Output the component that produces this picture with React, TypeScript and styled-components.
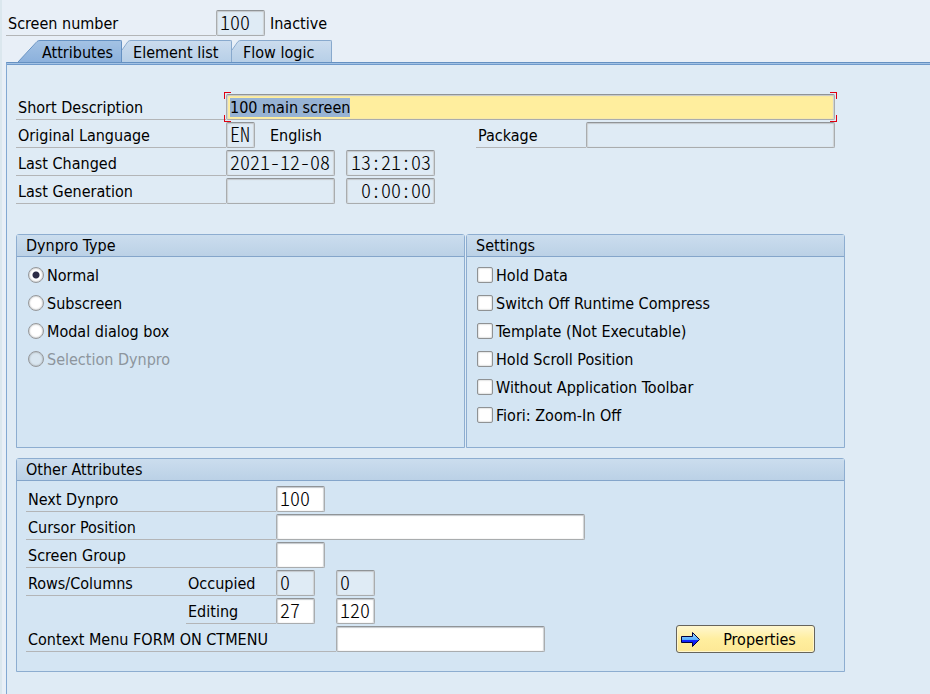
import React, { useEffect, useRef } from "react";
import styled, { createGlobalStyle, css } from "styled-components";

const GlobalStyle = createGlobalStyle`
  *, *::before, *::after { box-sizing: border-box; }
  body {
    margin: 0;
    background: #e8eff7;
    color: #000;
    font: 16px/27px "DejaVu Sans Condensed", "Noto Sans", sans-serif;
  }
  button, input { font: inherit; color: inherit; }
`;

const Page = styled.div`
  display: flex;
  flex-direction: column;
  min-height: 100vh;
  border-left: 2px solid #dbe7ee;
  padding: 10px 0 0 4px;
`;

const Row = styled.div<{ $inset?: number }>`
  display: flex;
  align-items: flex-start;
  height: 26px;
  padding-left: ${(p) => p.$inset ?? 0}px;
`;

const Label = styled.label<{ $width: number }>`
  flex: 0 0 ${(p) => p.$width}px;
  height: 26px;
  padding-left: 2px;
  white-space: nowrap;
  border-bottom: 1px solid #b3b5b7;
`;

const Caption = styled.span<{ $width?: number }>`
  flex: 0 0 ${(p) => (p.$width ? p.$width + "px" : "auto")};
  padding-left: 2px;
  white-space: nowrap;
`;

const Gap = styled.span<{ $width: number }>`
  flex: 0 0 ${(p) => p.$width}px;
`;

const Field = styled.input<{ $width?: number; $end?: boolean }>`
  ${(p) => (p.$width ? css`flex: 0 0 ${p.$width}px; width: ${p.$width}px;` : css`flex: 1 1 0;`)}
  min-width: 0;
  height: 26px;
  margin: 0;
  padding: 0 3px 3px;
  border: 1px solid #a9acae;
  border-top-color: #909497;
  border-radius: 2px;
  outline: none;
  background: #fff;
  box-shadow: inset 0 1px 1px #c4c8cc, inset 1px 0 1px #d0d3d6, inset -1px 0 1px #d0d3d6;
  font-family: "Noto Sans CJK KR", sans-serif;
  font-size: 20px;
  font-weight: 300;
  font-feature-settings: "hwid";
  line-height: 22px;
  text-align: ${(p) => (p.$end ? "right" : "left")};
  &:read-only { background: #dfebf5; }
`;

const FocusFrame = styled.div`
  position: relative;
  flex: 1 1 0;
  display: flex;
`;

const DescriptionField = styled(Field)`
  padding: 1px 3px 0;
  background: #ffee9e;
  font-family: "DejaVu Sans Condensed", "Noto Sans", sans-serif;
  font-size: 16px;
  font-weight: 400;
  &::selection { background: rgba(150, 178, 212, 0.99); color: #000; }
`;

const Corner = styled.span<{ $v: "top" | "bottom"; $h: "left" | "right" }>`
  position: absolute;
  width: 7px;
  height: 7px;
  ${(p) => p.$v}: -2px;
  ${(p) => p.$h}: -2px;
  border: 0 solid #e00010;
  border-${(p) => p.$v}-width: 1px;
  border-${(p) => p.$h}-width: 1px;
  pointer-events: none;
`;

const TabBar = styled.div`
  display: flex;
  align-items: flex-end;
  height: 22px;
  margin-top: 4px;
  padding-left: 12px;
`;

const TabButton = styled.button<{ $width: number }>`
  display: flex;
  min-width: ${(p) => p.$width}px;
  height: 22px;
  padding: 0;
  border: 0;
  background: none;
`;

const TabText = styled.span<{ $active?: boolean }>`
  flex: 1;
  height: 22px;
  padding: 0 8px 0 2px;
  line-height: 23px;
  text-align: left;
  white-space: nowrap;
  border: solid ${(p) => (p.$active ? "#6591c2" : "#88a9cd")};
  border-width: 1px 1px 0 0;
  border-top-right-radius: 2px;
  background: ${(p) => (p.$active ? "linear-gradient(#a3c2e4, #8cb1dc)" : "linear-gradient(#cbdcee, #b7cfe7)")};
`;

const TabPanel = styled.main`
  flex: 1;
  border-left: 1px solid #82a8d2;
  border-top: 1px solid #6591c2;
  box-shadow: inset 0 1px #a3c2e4, inset 0 2px #6f9acb;
  background: #dfebf5;
  padding: 31px 9px 0 9px;
`;

const Content = styled.div`
  max-width: 829px;
`;

const Rows = styled.div`
  display: flex;
  flex-direction: column;
  gap: 2px;
`;

const Groups = styled.div`
  display: grid;
  grid-template-columns: 449fr 379fr;
  gap: 10px 1px;
  margin-top: 30px;
`;

const Group = styled.fieldset<{ $wide?: boolean }>`
  ${(p) => p.$wide && "grid-column: 1 / -1;"}
  min-width: 0;
  margin: 0;
  padding: 0;
  border: 1px solid #8dadd0;
  border-radius: 3px 3px 0 0;
  background: #d4e5f3;
`;

const GroupTitle = styled.legend`
  float: left;
  width: 100%;
  height: 22px;
  padding: 0 9px;
  line-height: 21px;
  border-bottom: 1px solid #84a5ca;
  background: linear-gradient(#cbddee, #bbd1e6);
`;

const GroupBody = styled.div<{ $options?: boolean }>`
  clear: both;
  padding: ${(p) => (p.$options ? "4px 10px 18px" : "5px 29px 19px 9px")};
`;

const Option = styled.label<{ $disabled?: boolean }>`
  display: flex;
  align-items: center;
  gap: 3px;
  height: 28px;
  line-height: 29px;
  color: ${(p) => (p.$disabled ? "#8d959d" : "#000")};
`;

const Radio = styled.input`
  appearance: none;
  width: 16px;
  height: 16px;
  margin: 0 0 0 1px;
  border: 1px solid #95989b;
  border-radius: 50%;
  background: #fff;
  box-shadow: inset 0 0 2px #8f9294;
  &:checked { background: radial-gradient(circle, #2b2b45 3px, #fff 4px); }
  &:disabled { background: #d9e6f0; }
`;

const Check = styled.input`
  appearance: none;
  width: 16px;
  height: 16px;
  margin: 0;
  border: 1px solid #8f9294;
  border-radius: 2px;
  background: #fff;
  box-shadow: inset 0 0 2px #a8abad;
  &:checked { background: #2b2b45; }
`;

const PropertiesButton = styled.button`
  display: flex;
  align-items: center;
  width: 139px;
  height: 28px;
  margin: -1px 0 0 auto;
  padding: 0 4px;
  border: 1px solid #66645c;
  border-radius: 3px;
  background: linear-gradient(#fff7cf, #ffee9f 50%, #fde895);
  box-shadow: inset 0 0 0 1px #fff6cc;
`;

const ButtonText = styled.span`
  flex: 1;
  padding-left: 8px;
  text-align: center;
`;

const Slant = ({ width, foot, active }: { width: number; foot: number; active?: boolean }) => {
  const id = active ? "tabActive" : "tabIdle";
  const edge = active ? "#6591c2" : "#88a9cd";
  return (
    <svg width={width} height="22" viewBox={`0 0 ${width} 22`} aria-hidden="true">
      <defs>
        <linearGradient id={id} x1="0" y1="0" x2="0" y2="22" gradientUnits="userSpaceOnUse">
          <stop offset="0" stopColor={active ? "#a3c2e4" : "#cbdcee"} />
          <stop offset="1" stopColor={active ? "#8cb1dc" : "#b7cfe7"} />
        </linearGradient>
      </defs>
      <path d={`M0 22V${foot}L${width - 2} 1L${width} 0V22Z`} fill={`url(#${id})`} />
      <path d={`M0 ${foot}L${width - 3} 1.5Q${width - 2} .5 ${width} .5`} fill="none" stroke={edge} />
    </svg>
  );
};

const Arrow = () => (
  <svg width="20" height="17" viewBox="0 0 20 17" aria-hidden="true">
    <defs>
      <linearGradient id="arrowFill" x1="0" y1="0" x2="0" y2="17" gradientUnits="userSpaceOnUse">
        <stop offset="0.2" stopColor="#8fd4ff" />
        <stop offset="0.5" stopColor="#5aaeff" />
        <stop offset="0.54" stopColor="#1428ff" />
        <stop offset="1" stopColor="#0000d8" />
      </linearGradient>
    </defs>
    <path d="M.5 5.5H11.5V1.5L18.5 8.5L11.5 15.5V11.5H.5Z" fill="url(#arrowFill)" stroke="#000040" />
  </svg>
);

const tabs = [
  { text: "Attributes", width: 104, slant: 22, foot: 22, active: true },
  { text: "Element list", width: 110, slant: 9, foot: 10 },
  { text: "Flow logic", width: 100, slant: 9, foot: 10 },
];

const dynproTypes = ["Normal", "Subscreen", "Modal dialog box", "Selection Dynpro"];

const settings = [
  "Hold Data",
  "Switch Off Runtime Compress",
  "Template (Not Executable)",
  "Hold Scroll Position",
  "Without Application Toolbar",
  "Fiori: Zoom-In Off",
];

export default function App() {
  const description = useRef<HTMLInputElement>(null);

  useEffect(() => {
    description.current?.focus();
    description.current?.select();
  }, []);

  return (
    <>
      <GlobalStyle />
      <Page>
        <Row>
          <Label $width={210} htmlFor="screen">Screen number</Label>
          <Field id="screen" $width={49} defaultValue="100" readOnly />
          <Gap $width={3} />
          <Caption>Inactive</Caption>
        </Row>
        <TabBar role="tablist">
          {tabs.map((t) => (
            <TabButton key={t.text} type="button" role="tab" aria-selected={!!t.active} $width={t.width}>
              <Slant width={t.slant} foot={t.foot} active={t.active} />
              <TabText $active={t.active}>{t.text}</TabText>
            </TabButton>
          ))}
        </TabBar>
        <TabPanel>
          <Content>
            <Rows>
              <Row>
                <Label $width={210} htmlFor="desc">Short Description</Label>
                <FocusFrame>
                  <DescriptionField id="desc" ref={description} defaultValue="100 main screen" />
                  <Corner $v="top" $h="left" />
                  <Corner $v="top" $h="right" />
                  <Corner $v="bottom" $h="left" />
                  <Corner $v="bottom" $h="right" />
                </FocusFrame>
                <Gap $width={10} />
              </Row>
              <Row>
                <Label $width={210} htmlFor="lang">Original Language</Label>
                <Field id="lang" $width={29} defaultValue="EN" readOnly />
                <Gap $width={13} />
                <Caption $width={208}>English</Caption>
                <Label $width={110} htmlFor="package">Package</Label>
                <Field id="package" readOnly />
                <Gap $width={10} />
              </Row>
              <Row>
                <Label $width={210} htmlFor="changed">Last Changed</Label>
                <Field id="changed" $width={109} defaultValue="2021-12-08" readOnly />
                <Gap $width={11} />
                <Field aria-label="Last changed time" $width={89} $end defaultValue="13:21:03" readOnly />
              </Row>
              <Row>
                <Label $width={210} htmlFor="generated">Last Generation</Label>
                <Field id="generated" $width={109} readOnly />
                <Gap $width={11} />
                <Field aria-label="Last generation time" $width={89} $end defaultValue="0:00:00" readOnly />
              </Row>
            </Rows>
            <Groups>
              <Group>
                <GroupTitle>Dynpro Type</GroupTitle>
                <GroupBody $options>
                  {dynproTypes.map((name, i) => (
                    <Option key={name} $disabled={i === 3}>
                      <Radio type="radio" name="dynpro" defaultChecked={i === 0} disabled={i === 3} />
                      {name}
                    </Option>
                  ))}
                </GroupBody>
              </Group>
              <Group>
                <GroupTitle>Settings</GroupTitle>
                <GroupBody $options>
                  {settings.map((name) => (
                    <Option key={name}>
                      <Check type="checkbox" />
                      {name}
                    </Option>
                  ))}
                </GroupBody>
              </Group>
              <Group $wide>
                <GroupTitle>Other Attributes</GroupTitle>
                <GroupBody>
                  <Rows>
                    <Row>
                      <Label $width={250} htmlFor="next">Next Dynpro</Label>
                      <Field id="next" $width={49} defaultValue="100" />
                    </Row>
                    <Row>
                      <Label $width={250} htmlFor="cursor">Cursor Position</Label>
                      <Field id="cursor" $width={309} />
                    </Row>
                    <Row>
                      <Label $width={250} htmlFor="group">Screen Group</Label>
                      <Field id="group" $width={49} />
                    </Row>
                    <Row>
                      <Label as="span" $width={160}>Rows/Columns</Label>
                      <Label $width={90} htmlFor="occupied">Occupied</Label>
                      <Field id="occupied" $width={39} defaultValue="0" readOnly />
                      <Gap $width={21} />
                      <Field aria-label="Occupied columns" $width={39} defaultValue="0" readOnly />
                    </Row>
                    <Row $inset={160}>
                      <Label $width={90} htmlFor="editing">Editing</Label>
                      <Field id="editing" $width={39} defaultValue="27" />
                      <Gap $width={21} />
                      <Field aria-label="Editing columns" $width={39} defaultValue="120" />
                    </Row>
                    <Row>
                      <Label $width={310} htmlFor="context">Context Menu FORM ON CTMENU</Label>
                      <Field id="context" $width={209} />
                      <PropertiesButton type="button">
                        <Arrow />
                        <ButtonText>Properties</ButtonText>
                      </PropertiesButton>
                    </Row>
                  </Rows>
                </GroupBody>
              </Group>
            </Groups>
          </Content>
        </TabPanel>
      </Page>
    </>
  );
}
